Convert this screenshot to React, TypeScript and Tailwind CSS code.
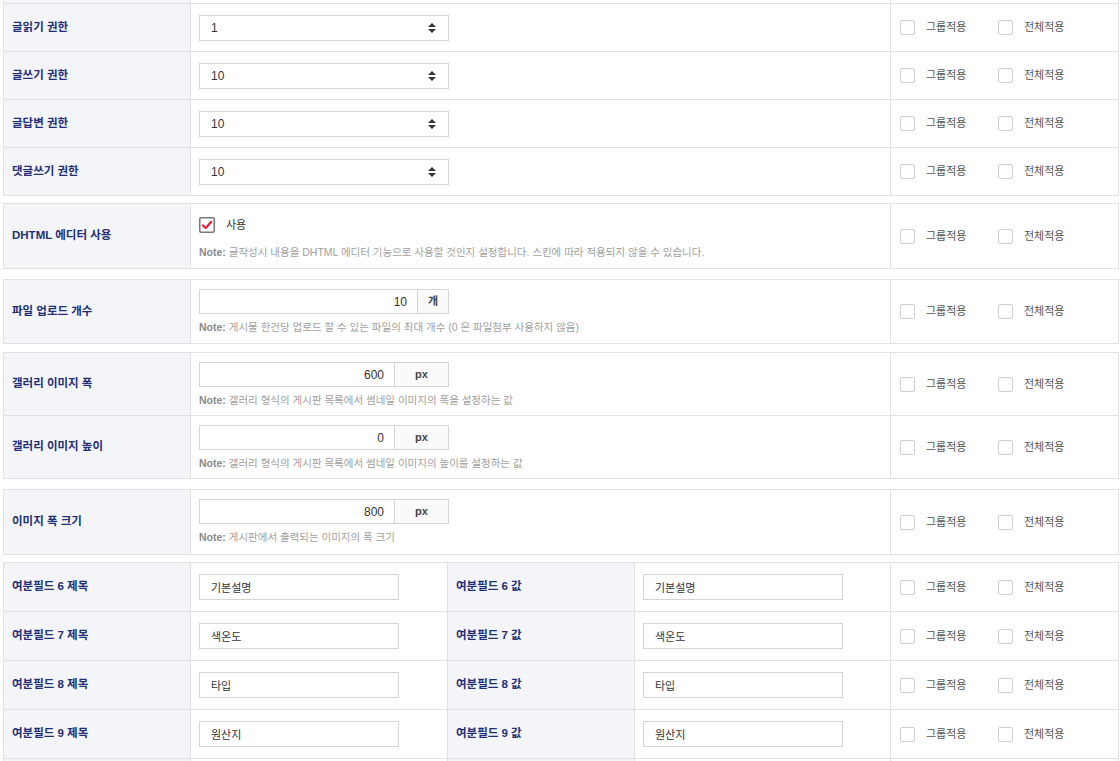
import React from 'react';

const line = 'border-[#e1e1e1]';

const Label = ({ children }: { children?: React.ReactNode }) => (
  <div className={`w-[187px] shrink-0 border-r ${line} bg-[#f4f5f8] pl-2 flex items-center text-[11.5px] font-bold text-[#1f2f78]`}>
    {children}
  </div>
);

const Box = () => (
  <span className="w-[15px] h-[15px] shrink-0 rounded-[2px] border border-[#cfcfcf] bg-white" />
);

const ApplyCell = () => (
  <div className="flex-1 flex items-center pl-[9px] text-[11px] text-[#555]">
    <label className="w-[98px] flex items-center">
      <Box />
      <span className="ml-[11px]">그룹적용</span>
    </label>
    <label className="flex items-center">
      <Box />
      <span className="ml-[11px]">전체적용</span>
    </label>
  </div>
);

const SelectBox = ({ value }: { value: string }) => (
  <div className="w-[250px] h-[26px] border border-[#d4d4d4] bg-white flex items-center justify-between pl-[11px] pr-[12px] text-[12px] text-[#333]">
    <span>{value}</span>
    <svg width="8" height="10" viewBox="0 0 8 10" fill="#333">
      <polygon points="0,4 4,0 8,4" />
      <polygon points="0,6 8,6 4,10" />
    </svg>
  </div>
);

const NumberBox = ({ value, unit, unitW }: { value: string; unit: string; unitW: string }) => (
  <div className="w-[250px] h-[25px] border border-[#d4d4d4] bg-white flex">
    <input
      readOnly
      value={value}
      className="flex-1 min-w-0 text-right pr-[10px] text-[12px] text-[#333] outline-none bg-transparent"
    />
    <span className={`${unitW} shrink-0 border-l border-[#d4d4d4] bg-[#fafafa] flex items-center justify-center text-[11px] font-bold text-[#444]`}>
      {unit}
    </span>
  </div>
);

const Note = ({ children, className = '' }: { children: React.ReactNode; className?: string }) => (
  <p className={`text-[10.5px] leading-[14px] text-[#a0a0a0] ${className}`}>
    <b className="text-[#8a8a8a]">Note:</b> {children}
  </p>
);

const TextBox = ({ value }: { value: string }) => (
  <input
    readOnly
    value={value}
    className="w-[200px] h-[26px] border border-[#d4d4d4] bg-white pl-[11px] text-[11px] text-[#333] outline-none"
  />
);

const Table = ({ children, className = '' }: { children: React.ReactNode; className?: string }) => (
  <div className={`ml-[3px] w-[1116px] border-l border-r ${line} ${className}`}>{children}</div>
);

const levelRows = [
  { label: '글읽기 권한', value: '1' },
  { label: '글쓰기 권한', value: '10' },
  { label: '글답변 권한', value: '10' },
  { label: '댓글쓰기 권한', value: '10' },
];

const extraRows = [
  { n: 6, value: '기본설명' },
  { n: 7, value: '색온도' },
  { n: 8, value: '타입' },
  { n: 9, value: '원산지' },
];

// blank row shell, used for the rows scrolled past the top and bottom edges
const EmptyRow = ({ h, split = false }: { h: string; split?: boolean }) => (
  <div className={`${h} flex border-b ${line}`}>
    <Label />
    {split ? (
      <>
        <div className={`w-[257px] shrink-0 border-r ${line}`} />
        <Label />
        <div className={`w-[256px] shrink-0 border-r ${line}`} />
      </>
    ) : (
      <div className={`w-[700px] shrink-0 border-r ${line}`} />
    )}
    <div className="flex-1" />
  </div>
);

export default function App() {
  return (
    <div className="h-[761px] overflow-hidden bg-white font-['Liberation_Sans','Noto_Sans_CJK_KR',sans-serif]">
      {/* permission selects */}
      <Table className="-mt-[44px]">
        <EmptyRow h="h-[48px]" />
        {levelRows.map((r) => (
          <div key={r.label} className={`h-[48px] flex border-b ${line}`}>
            <Label>{r.label}</Label>
            <div className={`w-[700px] shrink-0 border-r ${line} pl-2 flex items-center`}>
              <SelectBox value={r.value} />
            </div>
            <ApplyCell />
          </div>
        ))}
      </Table>

      {/* editor */}
      <Table className="mt-[7px] border-t">
        <div className={`h-[65px] flex border-b ${line}`}>
          <Label>DHTML 에디터 사용</Label>
          <div className={`w-[700px] shrink-0 border-r ${line} pl-2 pt-[13px]`}>
            <label className="flex items-center h-[16px]">
              <svg width="16" height="16" viewBox="0 0 16 16">
                <rect x="0.75" y="0.75" width="14.5" height="14.5" rx="1.5" fill="#fff" stroke="#777" strokeWidth="1.5" />
                <path d="M3.8 8.4 L6.8 11 L12.2 4.8" fill="none" stroke="#e3223c" strokeWidth="2.2" strokeLinecap="round" strokeLinejoin="round" />
              </svg>
              <span className="ml-[11px] text-[11px] text-[#333]">사용</span>
            </label>
            <Note className="mt-[12px]">
              글작성시 내용을 DHTML 에디터 기능으로 사용할 것인지 설정합니다. 스킨에 따라 적용되지 않을 수 있습니다.
            </Note>
          </div>
          <ApplyCell />
        </div>
      </Table>

      {/* upload count */}
      <Table className="mt-[10px] border-t">
        <div className={`h-[64px] flex border-b ${line}`}>
          <Label>파일 업로드 개수</Label>
          <div className={`w-[700px] shrink-0 border-r ${line} pl-2 pt-[9px]`}>
            <NumberBox value="10" unit="개" unitW="w-[31px]" />
            <Note className="mt-[6px]">게시물 한건당 업로드 할 수 있는 파일의 최대 개수 (0 은 파일첨부 사용하지 않음)</Note>
          </div>
          <ApplyCell />
        </div>
      </Table>

      {/* gallery sizes */}
      <Table className="mt-[8px] border-t">
        {[
          { label: '갤러리 이미지 폭', value: '600', note: '갤러리 형식의 게시판 목록에서 썸네일 이미지의 폭을 설정하는 값' },
          { label: '갤러리 이미지 높이', value: '0', note: '갤러리 형식의 게시판 목록에서 썸네일 이미지의 높이를 설정하는 값' },
        ].map((r) => (
          <div key={r.label} className={`h-[63px] flex border-b ${line}`}>
            <Label>{r.label}</Label>
            <div className={`w-[700px] shrink-0 border-r ${line} pl-2 pt-[9px]`}>
              <NumberBox value={r.value} unit="px" unitW="w-[54px]" />
              <Note className="mt-[6px]">{r.note}</Note>
            </div>
            <ApplyCell />
          </div>
        ))}
      </Table>

      {/* image width */}
      <Table className="mt-[10px] border-t">
        <div className={`h-[65px] flex border-b ${line}`}>
          <Label>이미지 폭 크기</Label>
          <div className={`w-[700px] shrink-0 border-r ${line} pl-2 pt-[9px]`}>
            <NumberBox value="800" unit="px" unitW="w-[54px]" />
            <Note className="mt-[6px]">게시판에서 출력되는 이미지의 폭 크기</Note>
          </div>
          <ApplyCell />
        </div>
      </Table>

      {/* extra fields */}
      <Table className="mt-[7px] border-t">
        {extraRows.map((r) => (
          <div key={r.n} className={`h-[49px] flex border-b ${line}`}>
            <Label>여분필드 {r.n} 제목</Label>
            <div className={`w-[257px] shrink-0 border-r ${line} pl-2 flex items-center`}>
              <TextBox value={r.value} />
            </div>
            <Label>여분필드 {r.n} 값</Label>
            <div className={`w-[256px] shrink-0 border-r ${line} pl-2 flex items-center`}>
              <TextBox value={r.value} />
            </div>
            <ApplyCell />
          </div>
        ))}
        <EmptyRow h="h-[49px]" split />
      </Table>
    </div>
  );
}
